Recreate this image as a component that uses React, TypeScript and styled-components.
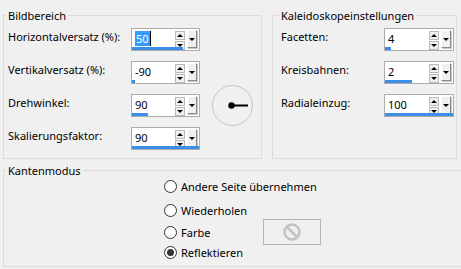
import styled, { createGlobalStyle } from "styled-components"

const Global = createGlobalStyle`
  html, body {
    margin: 0;
    padding: 0;
    background: #f0f0f0;
    overflow: hidden;
  }
  body {
    font-family: "Noto Sans", "Segoe UI", sans-serif;
    font-size: 11px;
    color: #000;
  }
`

const Window = styled.div`
  width: 461px;
  height: 269px;
  box-sizing: border-box;
  padding: 8px 0 0 3px;
  overflow: hidden;
`

const TopRow = styled.div`
  display: flex;
  gap: 10px;
  margin-right: 4px;
`

const Group = styled.fieldset<{ $w?: number }>`
  margin: 0;
  padding: 0;
  min-width: 0;
  border: 1px solid #dcdcdc;
  ${(p) => (p.$w ? `width: ${p.$w}px;` : "flex: 1;")}
  box-sizing: border-box;
`

const Legend = styled.legend<{ $off: number }>`
  margin-left: ${(p) => p.$off}px;
  padding: 2px 2px 0;
  line-height: 12px;
`

const Fields = styled.div<{ $cols: string }>`
  display: grid;
  grid-template-columns: ${(p) => p.$cols};
  grid-auto-rows: 23px;
  row-gap: 10px;
  padding: 6px 0 8px 4px;
`

const Label = styled.div<{ $indent?: number }>`
  grid-column: 1;
  align-self: start;
  padding: 1px 0 0 ${(p) => p.$indent ?? 0}px;
  line-height: 16px;
  white-space: nowrap;
`

const Spin = styled.div`
  grid-column: 2;
  position: relative;
  display: flex;
  align-items: flex-start;
  box-sizing: border-box;
  height: 23px;
  border: 1px solid #acacac;
  background: #fff;
  padding: 1px 2px 0 3px;
`

const Value = styled.div`
  flex: 1;
  line-height: 16px;
  padding-top: 1px;
`

const Selected = styled.span`
  display: inline-block;
  background: #3399ff;
  color: #fff;
  padding: 0 1px;
  border-right: 1px solid #000;
  line-height: 15px;
`

const Bar = styled.div`
  position: absolute;
  left: 0;
  bottom: 0;
  height: 3px;
  background: #3a8ee6;
`

const Arrows = styled.div`
  display: flex;
  flex-direction: column;
  gap: 1px;
  margin-top: 1px;
`

const ArrowBtn = styled.div<{ $down?: boolean }>`
  width: 8px;
  height: 7px;
  border: 1px solid #b9b9b9;
  background: #f0f0f0;
  display: flex;
  align-items: center;
  justify-content: center;
  &::after {
    content: "";
    border-left: 3px solid transparent;
    border-right: 3px solid transparent;
    ${(p) =>
      p.$down ? "border-top: 3px solid #000;" : "border-bottom: 3px solid #000;"}
  }
`

const DropBtn = styled.div`
  width: 8px;
  height: 16px;
  margin-left: 2px;
  background: #f0f0f0;
  border-top: 1px solid #fff;
  border-left: 1px solid #fff;
  border-right: 1px solid #8a8a8a;
  border-bottom: 1px solid #8a8a8a;
  box-shadow: 1px 1px 0 #c8c8c8;
  display: flex;
  align-items: center;
  justify-content: center;
  &::after {
    content: "";
    border-left: 3px solid transparent;
    border-right: 3px solid transparent;
    border-top: 3px solid #000;
  }
`

const DialCell = styled.div`
  grid-column: 3;
  grid-row: 2 / span 3;
  align-self: center;
  margin: 0 0 1px 12px;
  width: 41px;
  height: 41px;
`

const EdgeGroup = styled(Group)`
  margin-top: 4px;
  width: 470px;
`

const Radios = styled.div`
  display: flex;
  flex-direction: column;
  padding: 0 0 4px 160px;
`

const RadioRow = styled.div<{ $top: number }>`
  display: flex;
  align-items: center;
  height: 20px;
  margin-top: ${(p) => p.$top}px;
`

const RadioLabel = styled.label<{ $w?: number }>`
  display: flex;
  align-items: center;
  gap: 4px;
  white-space: nowrap;
  ${(p) => (p.$w ? `width: ${p.$w}px;` : "")}
`

const Circle = styled.span<{ $on?: boolean }>`
  flex: none;
  width: 11px;
  height: 11px;
  border: 1px solid #333;
  border-radius: 50%;
  background: #fff;
  display: flex;
  align-items: center;
  justify-content: center;
  &::after {
    content: "";
    width: 7px;
    height: 7px;
    border-radius: 50%;
    background: ${(p) => (p.$on ? "#333" : "transparent")};
  }
`

const Swatch = styled.div`
  flex: none;
  width: 58px;
  height: 26px;
  box-sizing: border-box;
  border: 1px solid #b4b4b4;
  display: flex;
  align-items: center;
  justify-content: center;
`

type SpinProps = { value: string; frac: number; selected?: boolean }

function SpinField({ value, frac, selected }: SpinProps) {
  return (
    <Spin>
      <Value>{selected ? <Selected>{value}</Selected> : value}</Value>
      <Arrows>
        <ArrowBtn />
        <ArrowBtn $down />
      </Arrows>
      <DropBtn />
      <Bar style={{ width: `${frac * 100}%` }} />
    </Spin>
  )
}

function Dial() {
  return (
    <DialCell>
      <svg width="41" height="41" viewBox="0 0 41 41">
        <circle cx="20.5" cy="20.5" r="20" fill="#f0f0f0" stroke="#c4c4c4" strokeWidth="1" />
        <line x1="19" y1="20.5" x2="36" y2="20.5" stroke="#000" strokeWidth="2" />
        <circle cx="19.5" cy="20.5" r="3.2" fill="#000" />
      </svg>
    </DialCell>
  )
}

function NoIcon() {
  return (
    <svg width="20" height="20" viewBox="0 0 20 20">
      <circle cx="10" cy="10" r="7.5" fill="none" stroke="#c3c3c3" strokeWidth="2.6" />
      <line x1="5" y1="5" x2="15" y2="15" stroke="#c3c3c3" strokeWidth="2.6" />
    </svg>
  )
}

export default function App() {
  return (
    <Window>
      <Global />
      <TopRow>
        <Group $w={259}>
          <Legend $off={2}>Bildbereich</Legend>
          <Fields $cols="123px 69px 53px">
            <Dial />
            <Label>Horizontalversatz (%):</Label>
            <SpinField value="50" frac={0.76} selected />
            <Label>Vertikalversatz (%):</Label>
            <SpinField value="-90" frac={0.05} />
            <Label>Drehwinkel:</Label>
            <SpinField value="90" frac={0.24} />
            <Label>Skalierungsfaktor:</Label>
            <SpinField value="90" frac={1} />
          </Fields>
        </Group>
        <Group>
          <Legend $off={6}>Kaleidoskopeinstellungen</Legend>
          <Fields $cols="107px 70px">
            <Label $indent={4}>Facetten:</Label>
            <SpinField value="4" frac={0.09} />
            <Label $indent={4}>Kreisbahnen:</Label>
            <SpinField value="2" frac={0.4} />
            <Label $indent={4}>Radialeinzug:</Label>
            <SpinField value="100" frac={1} />
          </Fields>
        </Group>
      </TopRow>
      <EdgeGroup>
        <Legend $off={2}>Kantenmodus</Legend>
        <Radios>
          <RadioRow $top={-1}>
            <RadioLabel>
              <Circle />
              Andere Seite übernehmen
            </RadioLabel>
          </RadioRow>
          <RadioRow $top={4}>
            <RadioLabel>
              <Circle />
              Wiederholen
            </RadioLabel>
          </RadioRow>
          <RadioRow $top={2}>
            <RadioLabel $w={99}>
              <Circle />
              Farbe
            </RadioLabel>
            <Swatch>
              <NoIcon />
            </Swatch>
          </RadioRow>
          <RadioRow $top={0}>
            <RadioLabel>
              <Circle $on />
              Reflektieren
            </RadioLabel>
          </RadioRow>
        </Radios>
      </EdgeGroup>
    </Window>
  )
}
